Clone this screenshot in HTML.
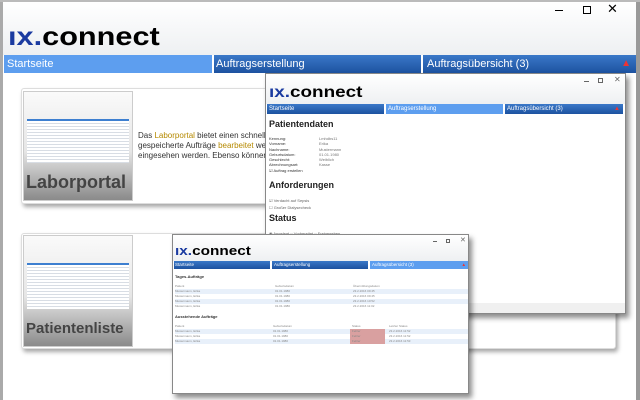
<!DOCTYPE html>
<html><head><meta charset="utf-8"><style>
*{margin:0;padding:0;box-sizing:border-box}
body{width:640px;height:400px;overflow:hidden;background:#fff;font-family:"Liberation Sans",sans-serif;position:relative}
.abs{position:absolute}
.win{background:#fff;border:1px solid #888;box-shadow:3px 4px 5px rgba(0,0,0,.45)}
.tb{background:linear-gradient(#fff,#eef0f2)}
.nav{display:flex}
.nav div{color:#fff;background:linear-gradient(#3a78c8,#1d52a0);border-right:2px solid #fff;white-space:nowrap;overflow:hidden}
.nav div.a{background:#5d9eef}
.logo{font-weight:bold;color:#000;transform:scaleX(1.18);transform-origin:0 0;white-space:nowrap}
.logo b{color:#1a3aa0}
.card{background:#fff;border:1px solid #ddd;border-radius:3px;box-shadow:2px 3px 4px rgba(0,0,0,.35)}
.thumb{background:linear-gradient(#fafafa 0%,#e6e6e6 55%,#8a8a8a 100%);border:1px solid #ccc;overflow:hidden}
.thumb .lbl{position:absolute;left:2px;bottom:7px;font-weight:bold;color:#444;font-size:18px;white-space:nowrap}
.shot{position:absolute;background:repeating-linear-gradient(#fff 0 2px,#d8dde4 2px 3px);border-top:2px solid #3d7fd0}
.tr{height:5px;font-size:3px;color:#888}
.sm{font-size:4px;color:#333}
</style></head><body>
<div class="abs" style="left:0;top:0;width:3px;height:400px;background:#aaa"></div>
<div class="abs" style="left:636px;top:0;width:4px;height:400px;background:#999"></div>
<div class="abs" style="left:0;top:0;width:640px;height:2px;background:#bbb"></div>
<div class="abs tb" style="left:3px;top:2px;width:633px;height:53px"></div>
<div class="abs" style="left:555px;top:10px;width:8px;height:1px;background:#000"></div>
<div class="abs" style="left:583px;top:6px;width:8px;height:8px;border:1px solid #000"></div>
<div class="abs" style="left:607px;top:1px;font-size:13px;color:#000">✕</div>
<div class="abs logo" style="left:8px;top:21px;font-size:26px"><b>ıx.</b>connect</div>
<div class="abs nav" style="left:4px;top:55px;width:632px;height:18px;font-size:11px;line-height:18px">
<div class="a" style="width:210px;padding-left:3px">Startseite</div>
<div style="width:209px;padding-left:2px">Auftragserstellung</div>
<div style="width:213px;padding-left:4px;border:none">Auftragsübersicht (3)<span style="float:right;margin-right:5px;color:#e33;font-size:10px">▲</span></div>
</div>
<div class="abs card" style="left:21px;top:88px;width:595px;height:116px"></div>
<div class="abs thumb" style="left:23px;top:91px;width:110px;height:110px">
<div class="shot" style="left:3px;top:27px;width:102px;height:44px"></div>
<div class="lbl">Laborportal</div></div>
<div class="abs" style="left:138px;top:131px;font-size:8px;line-height:10px;color:#333;width:128px;overflow:hidden;white-space:nowrap">Das <span style="color:#b58900">Laborportal</span> bietet einen schnellen Üb<br>gespeicherte Aufträge <span style="color:#b58900">bearbeitet</span> werden<br>eingesehen werden. Ebenso können Teil-</div>
<div class="abs card" style="left:21px;top:233px;width:595px;height:116px"></div>
<div class="abs thumb" style="left:23px;top:235px;width:110px;height:112px">
<div class="shot" style="left:3px;top:27px;width:102px;height:46px"></div>
<div class="lbl" style="font-size:15px;bottom:9px">Patientenliste</div></div>
<div class="abs win" style="left:265px;top:73px;width:361px;height:241px">
<div class="tb" style="height:30px"></div>
<div class="abs" style="left:318px;top:7px;width:5px;height:1px;background:#666"></div>
<div class="abs" style="left:332px;top:4px;width:5px;height:5px;border:1px solid #666"></div>
<div class="abs" style="left:348px;top:1px;font-size:8px;color:#666">✕</div>
<div class="abs logo" style="left:3px;top:10px;font-size:16px"><b>ıx.</b>connect</div>
<div class="abs nav" style="left:1px;top:30px;width:356px;height:10px;font-size:6px;line-height:10px">
<div style="width:119px;padding-left:2px">Startseite</div>
<div class="a" style="width:119px;padding-left:2px">Auftragserstellung</div>
<div style="width:118px;padding-left:2px;border:none">Auftragsübersicht (3)<span style="float:right;margin-right:3px;color:#e33">▲</span></div>
</div>
<div class="abs" style="left:3px;top:45px;font-size:9px;font-weight:bold;color:#222">Patientendaten</div>
<div class="abs sm" style="left:3px;top:62px;line-height:5.3px">Kennung:<br>Vorname:<br>Nachname:<br>Geburtsdatum:<br>Geschlecht:<br>Abrechnungsart:<br>☑ Auftrag erstellen</div>
<div class="abs sm" style="left:53px;top:62px;line-height:5.3px;color:#777">Lmhdbs11<br>Erika<br>Mustermann<br>01.01.1980<br>Weiblich<br>Kasse</div>
<div class="abs" style="left:3px;top:106px;font-size:9px;font-weight:bold;color:#222">Anforderungen</div>
<div class="abs sm" style="left:3px;top:124px;line-height:6.5px;color:#666">☑ Verdacht auf Sepsis<br>☐ Großer Dialysecheck</div>
<div class="abs" style="left:3px;top:139px;font-size:9px;font-weight:bold;color:#222">Status</div>
<div class="abs sm" style="left:3px;top:157px;color:#666">◉ Angelegt ○ Vorbereitet ○ Freigegeben</div>
<div class="abs" style="left:0;top:229px;width:359px;height:10px;background:#f0f0f0"></div>
</div>
<div class="abs win" style="left:172px;top:234px;width:297px;height:160px">
<div class="tb" style="height:26px"></div>
<div class="abs" style="left:260px;top:6px;width:4px;height:1px;background:#666"></div>
<div class="abs" style="left:273px;top:4px;width:4px;height:4px;border:1px solid #666"></div>
<div class="abs" style="left:287px;top:1px;font-size:7px;color:#666">✕</div>
<div class="abs logo" style="left:2px;top:8px;font-size:13px"><b>ıx.</b>connect</div>
<div class="abs nav" style="left:1px;top:26px;width:294px;height:8px;font-size:4.5px;line-height:8px">
<div style="width:98px;padding-left:1px">Startseite</div>
<div style="width:98px;padding-left:2px">Auftragserstellung</div>
<div class="a" style="width:98px;padding-left:2px;border:none">Auftragsübersicht (3)<span style="float:right;margin-right:2px;color:#e33">▲</span></div>
</div>
<div class="abs sm" style="left:2px;top:39px;font-weight:bold">Tages-Aufträge</div>
<div class="abs" style="left:2px;top:49px;width:293px;font-size:3.5px;color:#444">
<div class="tr" style="position:relative">Patient<span class="abs" style="left:100px">Geburtsdatum</span><span class="abs" style="left:178px">Übermittlungsdatum</span></div>
<div class="tr" style="position:relative;background:#e8f0fa">Mustermann, Erika<span class="abs" style="left:100px">01.01.1980</span><span class="abs" style="left:178px">23.2.2016 09:45</span></div>
<div class="tr" style="position:relative">Mustermann, Erika<span class="abs" style="left:100px">01.01.1980</span><span class="abs" style="left:178px">23.2.2016 09:45</span></div>
<div class="tr" style="position:relative;background:#e8f0fa">Mustermann, Erika<span class="abs" style="left:100px">01.01.1980</span><span class="abs" style="left:178px">23.2.2016 10:52</span></div>
<div class="tr" style="position:relative">Mustermann, Erika<span class="abs" style="left:100px">01.01.1980</span><span class="abs" style="left:178px">23.2.2016 11:02</span></div>
</div>
<div class="abs sm" style="left:2px;top:79px;font-weight:bold">Ausstehende Aufträge</div>
<div class="abs" style="left:2px;top:89px;width:293px;font-size:3.5px;color:#444">
<div class="tr" style="position:relative">Patient<span class="abs" style="left:98px">Geburtsdatum</span><span class="abs" style="left:177px">Status</span><span class="abs" style="left:214px">Letzter Status</span></div>
<div class="tr" style="position:relative;background:#e8f0fa">Mustermann, Erika<span class="abs" style="left:98px">01.01.1980</span><span class="abs" style="left:175px;width:35px;height:5px;background:#d9a0a0;padding-left:2px">Fehler</span><span class="abs" style="left:214px">23.2.2016 11:52</span></div>
<div class="tr" style="position:relative">Mustermann, Erika<span class="abs" style="left:98px">01.01.1980</span><span class="abs" style="left:175px;width:35px;height:5px;background:#d9a0a0;padding-left:2px">Fehler</span><span class="abs" style="left:214px">23.2.2016 11:52</span></div>
<div class="tr" style="position:relative;background:#e8f0fa">Mustermann, Erika<span class="abs" style="left:98px">01.01.1980</span><span class="abs" style="left:175px;width:35px;height:5px;background:#d9a0a0;padding-left:2px">Fehler</span><span class="abs" style="left:214px">23.2.2016 11:53</span></div>
</div>
</div>
</body></html>
